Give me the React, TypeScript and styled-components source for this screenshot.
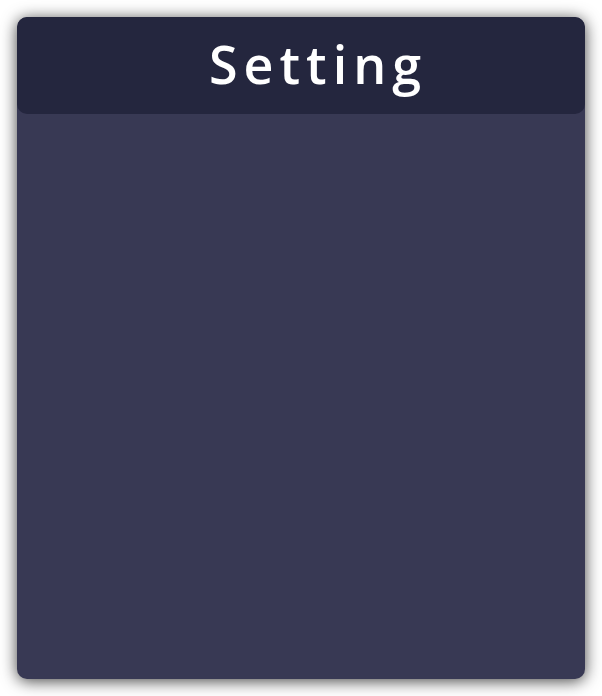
import styled, { createGlobalStyle } from 'styled-components';

const Global = createGlobalStyle`
    html, body {
        margin: 0;
        background: #fff;
    }

    #root {
        padding: 17px;
        box-sizing: border-box;
        height: 696px;
        display: flex;
    }
`;

const Panel = styled.section`
    flex: 1;
    display: flex;
    flex-direction: column;
    background-color: #383954;
    border-radius: 10px;
    box-shadow: 0 2px 16px rgba(0, 0, 0, 0.75);
    overflow: hidden;
`;

const Header = styled.header`
    height: 97px;
    background-color: #24263e;
    border-radius: 10px;
    display: flex;
    align-items: center;
    justify-content: center;
`;

const Title = styled.h1`
    margin: 0 0 4px 34px;
    font-family: 'Open Sans', 'Liberation Sans', sans-serif;
    font-weight: 600;
    font-size: 52px;
    letter-spacing: 6px;
    color: #fff;
`;

const Body = styled.div`
    flex: 1;
`;

const App = () => (
    <>
        <Global />
        <Panel>
            <Header>
                <Title>Setting</Title>
            </Header>
            <Body />
        </Panel>
    </>
);

export default App;
